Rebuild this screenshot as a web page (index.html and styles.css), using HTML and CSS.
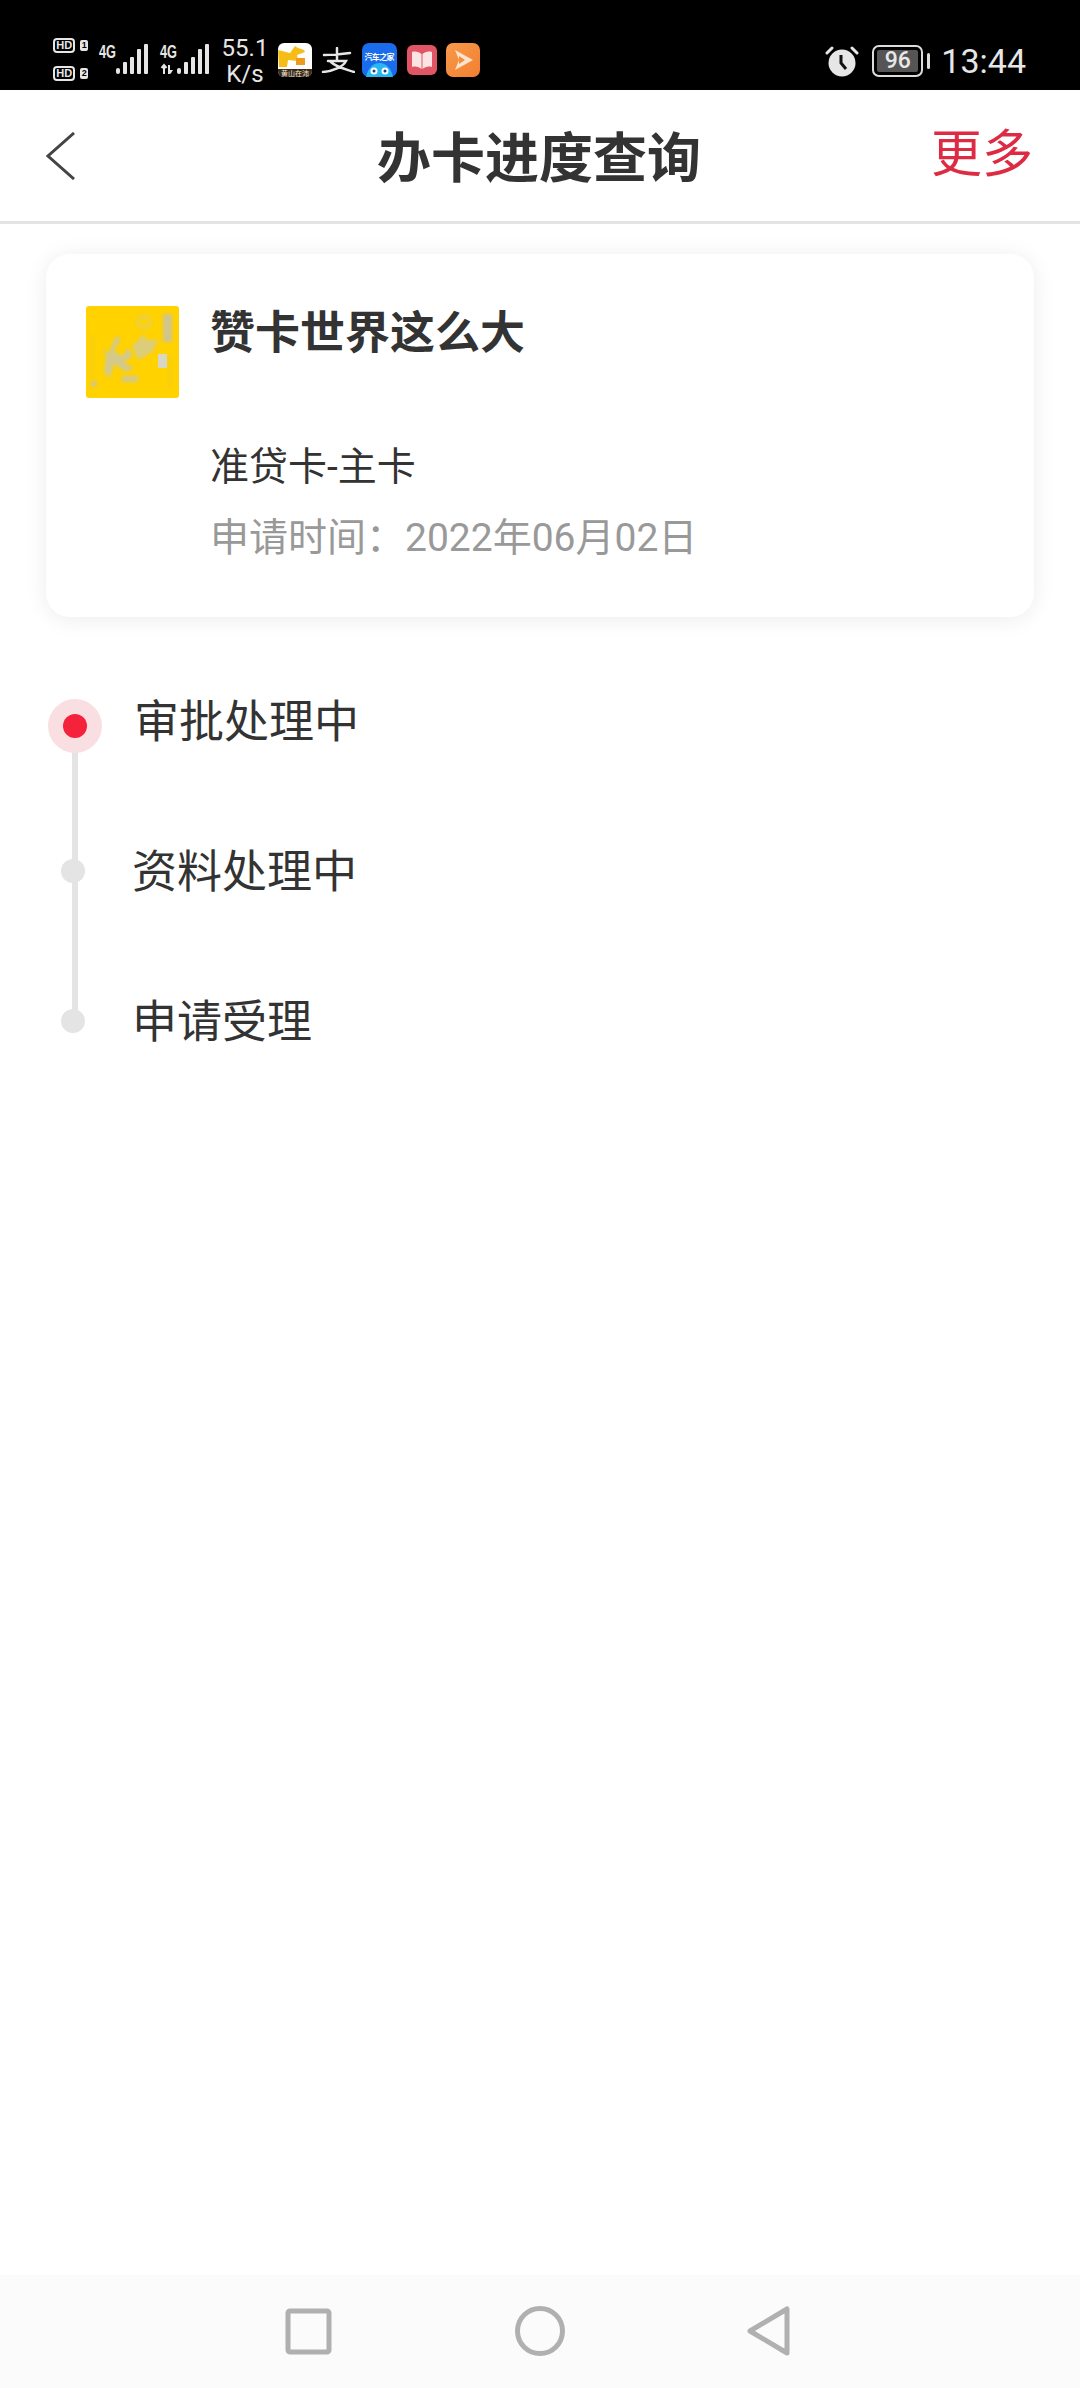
FILE: index.html
```html
<!DOCTYPE html>
<html lang="zh-CN">
<head>
<meta charset="utf-8">
<title>办卡进度查询</title>
<link rel="stylesheet" href="styles.css">
</head>
<body>
<div class="page">
  <header class="status">
    <div class="sims">
      <div class="sim"><span class="hd">HD</span><span class="slot">1</span></div>
      <div class="sim"><span class="hd">HD</span><span class="slot">2</span></div>
    </div>
    <svg class="signal" width="50" height="32" viewBox="0 0 50 32">
      <text class="net" x="1" y="15" textLength="17" lengthAdjust="spacingAndGlyphs">4G</text>
      <rect x="18" y="25" width="4" height="6" rx="2"/><rect x="25" y="19" width="4" height="12" rx="1"/><rect x="32" y="14" width="4" height="17" rx="1"/><rect x="39" y="6" width="4" height="25" rx="1"/><rect x="46" y="1" width="4" height="30" rx="1"/>
    </svg>
    <svg class="signal signal-two" width="50" height="32" viewBox="0 0 50 32">
      <text class="net" x="0" y="15" textLength="17" lengthAdjust="spacingAndGlyphs">4G</text>
      <path d="M4 31V22M1.500 25L4 22L6.500 25M9 22V31" class="arrows"/><path d="M8 27h5l-2.500 4z"/>
      <rect x="17" y="25" width="4" height="6" rx="2"/><rect x="24" y="19" width="4" height="12" rx="1"/><rect x="31" y="14" width="4" height="17" rx="1"/><rect x="38" y="6" width="4" height="25" rx="1"/><rect x="45" y="1" width="4" height="30" rx="1"/>
    </svg>
    <div class="speed"><span>55.1</span><span>K/s</span></div>
    <div class="apps">
      <svg width="34" height="34" viewBox="0 0 34 34">
        <rect width="34" height="34" rx="6" fill="#fff"/>
        <path d="M0 7L12 10L17 3L20 5L26 7L27 9L19 12L20 18L10 17L9 24L1 24z" fill="#f7bd17"/>
        <rect x="18" y="15" width="9" height="7" fill="#ed9a1d"/>
        <path d="M0 26H34V28A6 6 0 0 1 28 34H6A6 6 0 0 1 0 28z" fill="#3a2a1c"/>
        <text class="tiny-light" x="17" y="33" text-anchor="middle">黄山在沛</text>
      </svg>
      <svg class="alipay" width="34" height="26" viewBox="0 0 34 26">
        <path d="M3 8C12 8 22 7 29 6M16 1V14M7 14H25C22 20 12 24 2 25M10 15C15 20 24 22 33 25" fill="none" stroke="#e6e6e6" stroke-width="2.500" stroke-linecap="round"/>
      </svg>
      <svg width="35" height="34" viewBox="0 0 35 34">
        <rect width="35" height="34" rx="7" fill="#1a6cec"/>
        <text class="tiny-bold" x="17.500" y="17" text-anchor="middle" textLength="30">汽车之家</text>
        <path d="M4 34C6 24 12 20 17.500 20S29 24 31 34z" fill="#29b7f2"/>
        <circle cx="12" cy="28" r="3.500" fill="#fff"/><circle cx="23" cy="28" r="3.500" fill="#fff"/>
        <circle cx="12" cy="28" r="1.500" fill="#123f82"/><circle cx="23" cy="28" r="1.500" fill="#123f82"/>
      </svg>
      <svg width="30" height="30" viewBox="0 0 30 30">
        <rect width="30" height="30" rx="6" fill="#e25564"/>
        <path d="M5 7C9 6 12 7 14.500 9V24C12 22 9 21 5 22zM25 7C21 6 18 7 15.500 9V24C18 22 21 21 25 22z" fill="#fbe4e4"/>
      </svg>
      <svg width="34" height="34" viewBox="0 0 34 34">
        <defs><linearGradient id="og" x1="0" y1="0" x2="1" y2="1"><stop offset="0" stop-color="#f79a4a"/><stop offset="1" stop-color="#f27f30"/></linearGradient></defs>
        <rect width="34" height="34" rx="7" fill="url(#og)"/>
        <path d="M9 7L27 17L9 27L13 17z" fill="#fde3cd"/>
        <path d="M13 13L19 17L13 21z" fill="#f48b3c"/>
      </svg>
    </div>
    <div class="sys">
      <svg width="34" height="32" viewBox="0 0 34 32">
        <circle cx="17" cy="18" r="13.500" fill="#e6e6e6"/>
        <path d="M16 10V18L21 24" fill="none" stroke="#111" stroke-width="3"/>
        <path d="M2 8L7 3M32 8L27 3" stroke="#e6e6e6" stroke-width="3" stroke-linecap="round"/>
      </svg>
      <div class="battery"><span class="level">96</span></div>
      <span class="tip"></span>
      <span class="time">13:44</span>
    </div>
  </header>

  <nav class="nav">
    <div class="nav-back">
      <svg width="32" height="48" viewBox="0 0 32 48">
        <path d="M29 1L3 24L29 47" fill="none" stroke="#444" stroke-width="3"/>
      </svg>
    </div>
    <h1 class="nav-title">办卡进度查询</h1>
    <div class="nav-more">更多</div>
  </nav>

  <main class="main">
    <section class="card">
      <svg class="card-thumb" width="93" height="92" viewBox="0 0 93 92">
        <rect width="93" height="92" rx="3" fill="#ffd200"/>
        <g class="thumb-art">
          <path d="M17 42L22 48L30 30L35 33L28 45L36 50L42 42L47 50L38 56L48 62L40 66L28 58L24 72L18 66L20 52z" fill="#d4c98a"/>
          <path d="M46 40L58 28L60 34L72 34L66 46L52 54z" fill="#dccd7a"/>
          <path d="M36 70H52V76H36z" fill="#d4c98a"/>
          <circle cx="58" cy="16" r="6" fill="none" stroke="#e8cf50" stroke-width="3"/>
          <rect x="77" y="8" width="9" height="28" fill="#d0c68c"/>
          <circle cx="8" cy="78" r="3" fill="#d0c68c"/>
          <path d="M6 30V72M84 50V82" stroke="#e6c93c" stroke-width="1"/>
        </g>
        <rect class="thumb-chip" x="72" y="48" width="9" height="14" fill="#d8d6c4"/>
      </svg>
      <div class="card-body">
        <div class="card-title">赞卡世界这么大</div>
        <div class="card-type">准贷卡-主卡</div>
        <div class="card-date">申请时间：2022年06月02日</div>
      </div>
    </section>

    <ol class="timeline">
      <li class="step step-active"><span class="mark"></span><span class="step-label">审批处理中</span></li>
      <li class="step"><span class="mark"></span><span class="step-label">资料处理中</span></li>
      <li class="step"><span class="mark"></span><span class="step-label">申请受理</span></li>
    </ol>
  </main>

  <footer class="softkeys">
    <svg width="50" height="50" viewBox="0 0 50 50"><rect x="5" y="5" width="41" height="41" rx="2" fill="none" stroke="#b0b0b0" stroke-width="5"/></svg>
    <svg width="50" height="50" viewBox="0 0 50 50"><circle cx="25" cy="25" r="22.500" fill="none" stroke="#b0b0b0" stroke-width="5"/></svg>
    <svg width="50" height="50" viewBox="0 0 50 50"><path d="M40 3V47L3 25z" fill="none" stroke="#b0b0b0" stroke-width="5" stroke-linejoin="round"/></svg>
  </footer>
</div>
</body>
</html>
```
FILE: styles.css
```css
* { box-sizing: border-box; }
html, body { margin: 0; padding: 0; background: #fff; }
body { font-family: Roboto, "Noto Sans CJK SC", sans-serif; color: #333; }
.page { width: 1080px; height: 2388px; display: flex; flex-direction: column; overflow: hidden; }

/* status bar */
.status { height: 90px; flex: none; background: #000; color: #e6e6e6; display: flex; align-items: flex-start; padding: 38px 54px 0 53px; }
.status svg { display: block; fill: #e6e6e6; }
.sims { display: flex; flex-direction: column; gap: 13px; width: 35px; }
.sim { display: flex; align-items: center; gap: 5px; height: 15px; }
.hd { width: 23px; height: 15px; border: 2px solid #e6e6e6; border-radius: 4px; color: #e6e6e6; font: 700 11px/11px "Liberation Sans", sans-serif; text-align: center; }
.slot { width: 8px; height: 11px; border-radius: 2px; background: #e6e6e6; color: #000; font: 700 9px/11px "Liberation Sans", sans-serif; text-align: center; }
.signal { margin: 5px 0 0 10px; overflow: visible; }
.signal-two { margin-left: 12px; }
.net { font: 700 19px "Liberation Sans", sans-serif; }
.arrows { fill: none; stroke: #e6e6e6; stroke-width: 2; }
.speed { width: 50px; margin: -3px 0 0 10px; display: flex; flex-direction: column; align-items: center; font-size: 24px; line-height: 26px; }
.apps { display: flex; align-items: center; margin: 5px 0 0 8px; height: 34px; }
.status .alipay { margin-left: 9px; }
.apps svg:nth-of-type(3) { margin-left: 7px; }
.apps svg:nth-of-type(4) { margin-left: 10px; }
.apps svg:nth-of-type(5) { margin-left: 9px; }
.tiny-light { font: 400 7px "Noto Sans CJK SC", sans-serif; fill: #f2e6d0; }
.tiny-bold { font: 700 8px "Noto Sans CJK SC", sans-serif; fill: #fff; }
.sys { margin-left: auto; display: flex; align-items: center; height: 34px; margin-top: 6px; }
.battery { width: 51px; height: 32px; margin-left: 13px; padding: 3px; border: 2px solid #dcdcdc; border-radius: 7px; }
.level { display: block; height: 22px; background: #555; border-radius: 2px; color: #e8e8e8; font: 500 23px/22px Roboto, sans-serif; text-align: center; }
.tip { width: 3px; height: 16px; margin-left: 4px; background: #dcdcdc; border-radius: 2px; }
.time { margin-left: 11px; font-size: 34px; line-height: 34px; color: #e6e6e6; }

/* nav */
.nav { height: 134px; flex: none; display: grid; grid-template-columns: 1fr auto 1fr; align-items: center; background: #fff; border-bottom: 3px solid #e4e4e4; padding: 0 47px 0 45px; }
.nav-back svg { display: block; }
.nav-title { margin: 8px 0 0; font-size: 54px; line-height: 70px; font-weight: 700; color: #333; }
.nav-more { justify-self: end; font-size: 51px; line-height: 70px; color: #dc2b42; margin-top: -2px; }

/* card */
.main { flex: 1; padding: 30px 46px 0 46px; }
.card { height: 363px; display: flex; gap: 31px; align-items: flex-start; padding: 52px 40px 0; background: #fff; border-radius: 24px; box-shadow: 0 2px 22px rgba(0, 0, 0, .08); }
.card-thumb { display: block; flex: none; }
.thumb-art { filter: blur(1.5px); }
.card-body { display: flex; flex-direction: column; padding-top: 3px; }
.card-title { font-size: 45px; line-height: 50px; font-weight: 700; color: #333; }
.card-type { margin-top: 83px; font-size: 39px; line-height: 50px; color: #333; }
.card-date { margin-top: 21px; font-size: 39px; line-height: 50px; color: #999; }

/* timeline */
.timeline { position: relative; list-style: none; margin: 77px 0 0; padding: 0; display: flex; flex-direction: column; gap: 100px; }
.timeline::before { content: ""; position: absolute; left: 26px; top: 50px; height: 270px; width: 6px; background: #e4e4e4; }
.step { position: relative; height: 50px; display: flex; align-items: center; gap: 32px; }
.mark { flex: none; width: 24px; height: 24px; margin: 4px 15px 0 15px; border-radius: 50%; background: #e4e4e4; }
.step-active .mark { width: 54px; height: 54px; margin: 14px 0 0 2px; background: #f9dfe2; display: flex; align-items: center; justify-content: center; }
.step-active .mark::before { content: ""; width: 24px; height: 24px; border-radius: 50%; background: #f5223b; }
.step-label { margin-top: 8px; font-size: 45px; line-height: 50px; color: #333; }

/* soft keys */
.softkeys { height: 113px; flex: none; background: #fbfbfb; display: flex; justify-content: center; align-items: center; gap: 182px; padding-bottom: 2px; }
.softkeys svg { display: block; }
```
